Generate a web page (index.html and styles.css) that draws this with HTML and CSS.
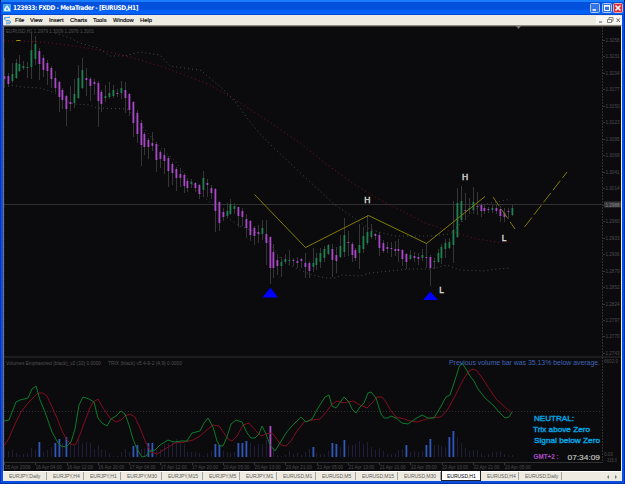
FILE: index.html
```html
<!DOCTYPE html>
<html lang="en">
<head>
  <meta charset="UTF-8" />
  <meta name="viewport" content="width=device-width, initial-scale=1.0"/>
  <title>MetaTrader - EURUSD,H1</title>
  <link rel="stylesheet" href="styles.css">
</head>
<body>
  <div class="window">
    <header class="titlebar">
      <svg class="app-icon" viewBox="0 0 8 8">
        <rect width="8" height="8" rx="1" fill="#4ba6e8"/>
        <path d="M1 7V5L4 1L7 5V7Z" fill="#d9effc"/>
        <path d="M3 6L4 3L5 6Z" fill="#3a8fd8"/>
      </svg>
      <h1>123933: FXDD - MetaTrader - [EURUSD,H1]</h1>
      <div class="win-btns">
        <svg viewBox="0 0 10 10"><rect x=".5" y=".5" width="9" height="9" rx="1" fill="#3574e8" stroke="#a9c8f8"/><path d="M2.5 7H6" stroke="#fff" stroke-width="1.5"/></svg>
        <svg viewBox="0 0 10 10"><rect x=".5" y=".5" width="9" height="9" rx="1" fill="#3574e8" stroke="#a9c8f8"/><path d="M2.5 3H7.5V7.5H2.5Z" fill="none" stroke="#fff"/><path d="M2 2.7H8" stroke="#fff" stroke-width="1.4"/></svg>
        <svg viewBox="0 0 10 10"><rect x=".5" y=".5" width="9" height="9" rx="1" fill="#dc2c3c" stroke="#f0a8a0"/><path d="M2.5 2.5L7.5 7.5M7.5 2.5L2.5 7.5" stroke="#fff" stroke-width="1.5"/></svg>
      </div>
    </header>

    <nav class="menubar">
      <svg class="menu-icon" viewBox="0 0 9 9"><path d="M7 1.5H3Q1 1.5 1.5 3T4 4.5H6Q8 5 7.5 6.5T6 7.8H3M1 2L7 1M3 6.2H8" fill="none" stroke="#5fa4e6"/></svg>
      <a class="m-file">File</a>
      <a class="m-view">View</a>
      <a class="m-insert">Insert</a>
      <a class="m-charts">Charts</a>
      <a class="m-tools">Tools</a>
      <a class="m-window">Window</a>
      <a>Help</a>
      <svg class="mdi-btns" viewBox="0 0 26 8">
        <path d="M3 6H6" stroke="#555" />
        <path d="M11.5 3.5H15.500V6.500H11.500ZM13 3V1.500H17V5H16" fill="none" stroke="#666" stroke-width=".8"/>
        <path d="M20.500 2.300L24 6M24 2.300L20.500 6" stroke="#555" stroke-width=".9"/>
      </svg>
    </nav>

    <main class="chart">
      <svg id="chart" width="617" height="445" viewBox="4 26 617 445"></svg>
    </main>

    <footer class="tabs">
      <span>EURJPY,Daily</span>
      <span>EURJPY,H4</span>
      <span>EURJPY,H1</span>
      <span>EURJPY,M30</span>
      <span>EURJPY,M15</span>
      <span>EURJPY,M5</span>
      <span>EURJPY,M1</span>
      <span>EURUSD,M1</span>
      <span>EURUSD,M5</span>
      <span>EURUSD,M15</span>
      <span>EURUSD,M30</span>
      <span class="active">EURUSD,H1</span>
      <span>EURUSD,H4</span>
      <span>EURUSD,Daily</span>
      <svg class="arrows" viewBox="0 0 14 6"><path d="M4 1L2 3L4 5Z M10 1L12 3L10 5Z" fill="#777"/></svg>
    </footer>
  </div>
  <script src="script.js"></script>
</body>
</html>
```
FILE: styles.css
```css
* {
  margin: 0;
  padding: 0;
  box-sizing: border-box;
}

body {
  width: 625px;
  height: 484px;
  overflow: hidden;
  background: #000;
  font-family: "Liberation Sans", Arial, sans-serif;
}

.window {
  width: 625px;
  height: 484px;
  padding: 0 2px 2px;
  display: flex;
  flex-direction: column;
  background: #0a50e0;
  border-right: 1px solid #0030a8;
  border-bottom: 1px solid #0030a8;
  border-left: 1px solid #0030c0;
  border-radius: 3px 3px 0 0;
}

.titlebar {
  height: 15px;
  display: flex;
  align-items: center;
  margin: 0 -2px;
  padding: 1px 1px 0 2px;
  background: linear-gradient(#1a7cff 0 2px, #0350dc 2px 9px, #0062fa 11px 14px, #0048d0 14px);
}

.app-icon {
  width: 8px;
  height: 8px;
}

.titlebar h1 {
  margin-left: 2px;
  font-family: "DejaVu Sans Condensed", "DejaVu Sans", sans-serif;
  font-stretch: condensed;
  font-size: 6.500px;
  line-height: 14px;
  letter-spacing: -0.42px;
  color: #fff;
  white-space: nowrap;
}

.win-btns {
  display: flex;
  gap: 1.500px;
  margin-left: auto;
}

.win-btns svg {
  width: 10px;
  height: 10px;
}

.menubar {
  height: 10px;
  flex: none;
  display: flex;
  align-items: center;
  background: #eeebe2;
  font-size: 5.800px;
  line-height: 10px;
  color: #000;
  -webkit-text-stroke: .15px #000;
}

.menu-icon {
  width: 9px;
  height: 9px;
  margin-right: 3px;
}

.menubar a { white-space: nowrap; }
.m-file { width: 15px; }
.m-view { width: 19px; }
.m-insert { width: 21px; }
.m-charts { width: 23px; }
.m-tools { width: 20px; }
.m-window { width: 27px; }

.mdi-btns {
  width: 26px;
  height: 8px;
  margin-left: auto;
  background: #f8f7f3;
}

.chart {
  height: 446px;
  flex: none;
  border-top: 1px solid #8c8b84;
  border-left: 1px solid #77736a;
  border-right: 1px solid #eeebe2;
  background: #0b0b0d;
}

.chart svg {
  display: block;
}

.tabs {
  flex: 1;
  display: grid;
  grid-template-columns: 44px 37px 37px 41px 41px 37px 37px 39px 40px 42px 43px 40px 38px 43px 1fr;
  background: #eeebe2;
  border-top: 1px solid #fff;
  font-size: 5.100px;
  line-height: 9px;
  letter-spacing: -0.08px;
  color: #5f5d57;
}

.tabs span {
  height: 8px;
  padding-left: 6px;
  border-right: 1px solid #a5a39b;
  white-space: nowrap;
}

.tabs span.active {
  height: 10px;
  margin-top: -1px;
  padding-left: 5px;
  line-height: 11px;
  background: #fff;
  border: 1px solid #222;
  border-top: none;
  color: #000;
}

.arrows {
  width: 14px;
  height: 6px;
  margin: 2px 0 0 43px;
}

/* chart drawing */
.wick { fill: #363639; }
.up { fill: #20804f; }
.down { fill: #ac48cc; }
.vol { fill: #1f1d3a; }
.vol-high { fill: #3158b8; }
.vol-climax { fill: #b04ccc; }
.axis { fill: #4b4b4e; font-size: 5px; }
.price { fill: #8a8a8a; font-size: 5px; }
.caption { fill: #505053; font-size: 5px; }
.line { stroke: #303032; fill: none; }
.band { fill: none; stroke: #44484c; stroke-dasharray: 1 3; }
.ma { fill: none; stroke: #7a0e1c; stroke-dasharray: 1 3; }
.trix { fill: none; stroke: #0b7a2c; }
.signal { fill: none; stroke: #820d20; }
.zigzag { fill: none; stroke: #817c00; }
.arrow { fill: #0000ff; }
.mark { fill: #e0e0e0; font-size: 8.500px; stroke: #e0e0e0; stroke-width: .3; }
.note { fill: #3f64b8; font-size: 7px; }
.status { fill: #00a8e6; font-size: 7.500px; stroke: #00a8e6; stroke-width: .35; }
.gmt { fill: #b04ccc; font-size: 6.500px; font-weight: bold; }
.clock { fill: #c8c8c8; font-size: 8px; stroke: #c8c8c8; stroke-width: .15; }
```
FILE: script.js
```javascript
// direction, high, body top, body bottom, low
const candles = `d 58 76 79 88|d 73 76 84 87|u 63 74 81 83|u 59 63 78 79|u 55 64 71 72|u 61 66 68 70|u 62 67 68 78|u 33 50 67 79|u 36 44 59 65|d 48 51 64 80
d 55 58 70 77|d 60 63 71 85|d 66 68 79 88|d 71 78 88 92|d 81 82 97 112|d 88 90 100 109|d 95 96 109 126|d 86 102 104 111|u 79 94 103 108|u 65 78 98 99
u 58 70 88 89|d 68 78 80 96|d 77 79 86 101|d 79 82 84 95|d 81 83 101 127|d 90 92 104 112|u 85 96 98 102|u 82 93 97 99|u 85 90 96 98|d 89 93 94 97
u 81 88 93 99|d 82 90 98 113|d 93 94 110 116|d 101 102 123 137|d 110 113 134 143|d 120 123 145 166|d 132 134 147 155|d 138 140 147 159|d 132 143 146 151|d 142 144 160 172
d 150 152 159 168|d 148 155 161 174|d 156 158 171 187|d 162 164 173 185|d 167 169 178 191|d 169 174 178 187|d 173 175 186 193|d 179 181 188 192|u 179 182 184 188|d 182 183 188 192
d 184 185 194 199|u 171 178 190 197|d 179 183 185 197|d 185 188 193 199|d 188 189 211 232|d 201 202 223 231|d 208 212 217 221|u 203 211 216 218|u 199 204 214 215|u 203 206 209 214
d 207 207 216 227|d 208 211 217 226|d 214 219 228 238|d 220 221 235 241|d 226 228 236 245|d 225 232 234 243|u 220 228 234 240|d 220 234 243 265|d 236 237 268 284|d 244 252 268 278
d 255 260 266 275|u 257 262 266 277|u 254 259 262 264|u 250 260 261 265|d 258 260 261 266|d 257 261 263 268|d 258 259 261 268|d 253 263 267 278|d 261 263 271 278|u 248 263 267 272
u 253 258 265 270|u 248 253 262 268|u 246 249 258 262|u 244 245 254 255|d 244 249 260 277|d 247 255 261 273|u 235 246 257 258|u 218 235 252 257|d 231 242 243 256|d 242 244 255 262
d 248 250 258 261|u 224 245 253 269|u 227 236 249 253|u 215 232 243 245|u 224 231 237 239|d 233 234 236 240|d 232 235 248 256|d 240 243 251 253|d 242 247 249 253|d 242 248 249 257
d 241 249 251 256|d 239 249 251 262|d 249 250 259 266|d 253 254 262 269|u 250 255 259 260|d 252 256 258 262|d 253 257 259 265|u 249 255 258 261|d 243 257 258 268|d 255 257 268 286
u 258 261 262 269|u 249 253 262 263|u 244 247 258 264|u 239 243 249 258|u 238 242 248 249|u 201 230 245 263|u 188 203 237 238|u 186 201 220 222|d 193 210 211 220|u 198 208 209 214
u 187 202 210 214|d 192 206 207 215|d 203 205 211 217|d 205 208 211 214|d 207 209 210 213|u 205 208 210 213|d 205 208 211 214|d 206 209 216 222|d 208 213 217 222|d 208 211 212 219
u 204 208 215 216`.split(/[|\n]/).map(c => c.split(' '));

// bar heights, "b" = above average, "c" = climax
const volumes = `9 6 7 4 2 3 4 9 7 15b 5 7 10 14b 18b 14 20b 13 13 18 14 15 14 8 12 8 7 4 1 1 5 8 5 11b 12b 8 8 14b 14b 7
8 13 14 15 18 15 13 5 5 5 4 1 4 6 13b 12b 6 5 4 5 14b 14b 16b 14 11 13 13 17 31c 9 2 1 2 6 3 4 2 5 8 10b
4 3 3 6 14b 13b 10 17b 12 12 13 16 13 15 10 7 9 6 3 3 4 7 8 12b 5 6 5 6 12b 18b 12 12 11 10 20b 26b 20 14 9 6
7 7 4 1 3 5 5 6 3 2 2`.split(/\s+/);

const step = 3.9077;
const barX = i => Math.round(3.8 + step * i);
let out = '';

function rect(cls, x, y, w, h) {
  out += `<rect class="${cls}" x="${x}" y="${y}" width="${w}" height="${h}"/>`;
}
function line(cls, points) {
  out += `<polyline class="${cls}" points="${points}"/>`;
}
function text(cls, x, y, str, width) {
  const len = width ? ` textLength="${width}" lengthAdjust="spacingAndGlyphs"` : '';
  out += `<text class="${cls}" x="${x}" y="${y}"${len}>${str}</text>`;
}

// frame lines and axes
rect('wick', 4, 26, 617, 1);
line('line', '4,204.5 603,204.5');
line('line', '4,357 621,357');
line('line', '4,462.5 603,462.5');
out += '<path class="line" d="M602.5 27V462" stroke-dasharray="2 1"/>';
out += '<path class="line" d="M4.500 27V462" stroke-dasharray="1 1" opacity=".6"/>';
out += '<path class="line" d="M5 411.5H602" stroke="#444" stroke-dasharray="1 2"/>';

for (let i = 0; i < 20; i++) {
  const y = 40 + i * 16.47;
  rect('wick', 603, Math.round(y), 2, 1);
  if (i !== 10) text('axis', 605.5, y + 2, (1.3258 - i * 0.00271).toFixed(4), 14);
}
rect('wick', 604, 201.5, 17, 6);
text('price', 605.5, 206.5, '1.2988', 14);
text('axis', 604, 363, '6602.0', 14);
text('axis', 604, 456, '0.00', 9);
text('axis', 606, 461.5, '-315.0', 11);

const times = ['15 Apr 2009', '16 Apr 04:00', '16 Apr 12:00', '16 Apr 20:00', '17 Apr 04:00', '17 Apr 12:00', '17 Apr 20:00',
  '20 Apr 05:00', '20 Apr 13:00', '20 Apr 21:00', '21 Apr 05:00', '21 Apr 13:00', '21 Apr 21:00',
  '22 Apr 05:00', '22 Apr 13:00', '22 Apr 21:00', '23 Apr 05:00'];
times.forEach((t, i) => {
  const x = 4 + i * step * 8;
  rect('wick', Math.round(x), 463, 1, 2);
  text('axis', x + .5, 468.5, t, 26);
});

text('caption', 6, 32.5, 'EURUSD,H1  1.2979 1.3009 1.2976 1.3001', 88);
text('caption', 6, 364.5, 'Volumes Emphasized (black)_v2 (10)  0.0000', 95);
text('caption', 108, 364.5, 'TRIX (black) v5 4-9-2 (4,9)  0.0000', 74);
out += '<path d="M516 26H521L518.500 29Z" fill="#77777a"/>';
out += '<path d="M16 40.500H20.500" stroke="#a0a000"/>';

// moving average and envelope
line('ma', '4,41 20,41 42,42 66,45 100,50 130,57 160,66 190,77 210,85 229,96 265,119 300,143 325,163 351,182 375,197 400,210 425,223 453,232 477,239 497,242 511,242');
line('band', '55,33 70,38 80,43 98,48 110,56 125,56 140,52 160,55 170,66 190,69 200,70 210,78 223,89 231,97 240,108 247,118 260,134 275,149 290,163 309,181 335,205 350,215 368,228 375,231 395,236 430,236 450,234 465,219 480,205 497,202 511,199');
line('band', '4,84 22,87 40,88 50,91 60,95 70,103 75,104 90,105 97,108 127,109 135,117 146,131 160,147 175,161 189,180 205,198 223,215 240,226 262,235 270,243 283,262 300,270 312,275 325,278 335,278 342,275 360,276 370,273 390,271 410,269 430,269 447,265 460,270 483,271 497,269 511,268');

candles.forEach((c, i) => {
  const [dir, high, top, bottom, low] = c;
  const x = barX(i);
  rect('wick', x, high, 1, low - high);
  rect(dir === 'u' ? 'up' : 'down', x - .5, top, 1.8, Math.max(1, bottom - top));
});

volumes.forEach((v, i) => {
  const h = parseInt(v);
  const x = barX(i);
  if (v.endsWith('b')) rect('vol-high', x - .5, 457 - h, 1.8, h);
  else if (v.endsWith('c')) rect('vol-climax', x - .5, 457 - h, 1.8, h);
  else rect('vol', x, 457 - h, 1, h);
});

line('signal', '4,446 9,438 15,424 21,412 28,403 34,397 38,393 43,393 47,396 52,407 57,418 62,431 67,440 72,445 76,444 81,432 86,418 90,408 93,402 98,399 103,408 110,418 116,422 121,420 125,416 130,414 135,417 140,428 146,443 151,452 157,454 165,449 175,443 185,442 193,440 200,436 208,429 213,425 219,426 224,433 228,439 232,441 237,436 243,425 249,423 255,430 261,436 266,434 272,433 276,438 281,445 286,446 291,441 297,431 304,422 312,420 320,419 327,411 332,404 337,401 344,403 353,401 360,405 367,408 373,402 377,397 382,397 386,402 391,411 396,417 405,419 410,421 417,422 430,418 441,417 448,409 455,396 463,380 468,372 473,369 477,371 483,379 490,390 497,400 505,407 512,413');
line('trix', '4,421 9,420 16,402 20,400 28,398 32,389 36,386 40,400 45,412 52,432 58,443 61,446 66,447 71,442 75,429 79,405 83,397 89,399 94,402 98,418 102,423 107,426 111,419 116,416 121,411 125,414 129,425 133,439 137,449 142,457 146,456 150,451 155,450 160,445 168,440 174,442 181,441 187,441 192,433 200,431 204,423 208,418 213,427 217,441 220,446 223,446 227,437 231,424 236,420 242,422 247,433 251,438 255,438 259,434 262,426 266,434 270,445 275,451 280,443 286,433 291,427 297,421 301,417 306,422 312,419 318,408 325,397 329,395 332,406 336,408 344,397 349,402 352,409 356,413 360,407 364,403 368,393 371,392 376,398 381,414 384,418 388,418 391,416 396,418 402,423 408,424 415,419 422,415 428,418 434,418 440,408 446,397 450,395 455,380 459,367 462,363 466,369 470,376 474,381 478,389 485,398 493,405 500,413 505,418 509,417 512,412');

// wave projection
line('zigzag', '254.5,194.5 305.5,247.5 368.5,215.5 426.5,243.5 485,196.5');
out += '<path class="zigzag" d="M493 197L515 229" stroke-dasharray="11 4"/>';
out += '<path class="zigzag" d="M524.500 227L567 172" stroke-dasharray="12 3.500"/>';
out += '<path class="arrow" d="M270.300 287.500L278 297.500H262.500Z M430.300 291.500L438 300H423Z"/>';
text('mark', 364.3, 203.3, 'H');
text('mark', 462, 180.3, 'H');
text('mark', 501.7, 241.3, 'L');
text('mark', 439.3, 293.2, 'L');

// indicator readout
text('note', 449, 365, 'Previous volume bar was 35.13% below average.', 151);
text('status', 534, 421, 'NEUTRAL:', 40);
text('status', 533, 432, 'Trix above Zero', 57);
text('status', 534, 442.5, 'Signal below Zero', 66);
text('gmt', 533.5, 459, 'GMT+2 :', 25);
text('clock', 567.5, 459.5, '07:34:09', 32.5);

document.getElementById('chart').innerHTML = out;
```
